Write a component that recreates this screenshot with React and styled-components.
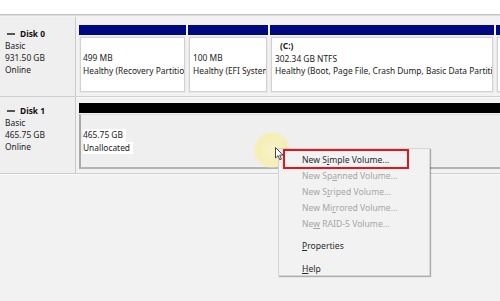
import React from "react";
import styled, { createGlobalStyle } from "styled-components";

const Global = createGlobalStyle`
  html, body { margin: 0; padding: 0; }
  body {
    width: 500px; height: 301px; overflow: hidden;
    background: #f2f2f2;
    font-family: "Noto Sans", "Open Sans", sans-serif;
    font-size: 8.4px;
    color: #222;
  }
`;

const Page = styled.div`
  position: relative;
  width: 500px;
  height: 301px;
  overflow: hidden;
  background: #f2f2f2;
`;

const TopBar = styled.div`
  height: 14px;
  background: #ffffff;
  border-bottom: 1px solid #c4c4c4;
  box-shadow: 0 1px 0 #dcdcdc;
`;

const Volumes = styled.div`
  display: flex;
  flex-direction: column;
  margin-top: 2px;
`;

const DiskRow = styled.div`
  display: flex;
  height: ${(p) => p.$h}px;
  border-bottom: 1px solid #cfcfcf;
  box-shadow: 0 1px 0 #fafafa;
`;

const DiskInfo = styled.div`
  width: 76px;
  flex: none;
  box-sizing: border-box;
  background: #efefef;
  border-right: 1px solid #c9c9c9;
  padding: ${(p) => p.$pt}px 0 0 5px;
  line-height: 12px;
`;

const DiskName = styled.div`
  display: flex;
  align-items: center;
  gap: 5px;
  font-weight: 700;
  color: #111;
  margin-left: 2px;
`;

const Dash = styled.span`
  display: inline-block;
  width: 8px;
  height: 2px;
  background: #555;
`;

const Track = styled.div`
  flex: 1;
  display: flex;
  gap: 2px;
  padding: ${(p) => p.$pt}px 0 0 3px;
  min-width: 0;
`;

const Partition = styled.div`
  flex: ${(p) => (p.$w ? `0 0 ${p.$w}px` : "1 0 40px")};
  display: flex;
  flex-direction: column;
  min-width: 0;
`;

const Bar = styled.div`
  height: 10px;
  background: ${(p) => p.$color};
`;

const Box = styled.div`
  margin-top: 1px;
  height: ${(p) => p.$h}px;
  box-sizing: border-box;
  background: #e9e9e9;
  padding: 1px;
`;

const BoxInner = styled.div`
  height: 100%;
  box-sizing: border-box;
  background: #ffffff;
  border: 1px solid #d2d2d2;
  padding: ${(p) => p.$pt}px 0 0 ${(p) => p.$pl}px;
  line-height: 12.5px;
  white-space: nowrap;
  overflow: hidden;
  color: #222;
`;

const Bold = styled.div`
  font-weight: 700;
  margin-left: 5px;
`;

const Unalloc = styled.div`
  margin-top: 1px;
  height: 55px;
  box-sizing: border-box;
  background: #efefef;
  border-left: 2px solid #a9a9a9;
  border-bottom: 2px solid #b4b4b4;
  border-top: 1px solid #dedede;
  padding: 14px 0 0 2px;
  line-height: 12.5px;
`;

const Line = styled.div`
  display: inline-block;
  background: #ffffff;
  padding-right: 3px;
`;

const Halo = styled.div`
  position: absolute;
  left: 254px;
  top: 132px;
  width: 36px;
  height: 36px;
  border-radius: 50%;
  background: radial-gradient(circle, rgba(255, 245, 170, 0.55) 0%, rgba(250, 238, 140, 0.6) 55%, rgba(250, 240, 160, 0.25) 85%, rgba(250, 240, 160, 0) 100%);
`;

const Cursor = styled.svg`
  position: absolute;
  left: 275px;
  top: 147px;
`;

const Menu = styled.div`
  position: absolute;
  left: 278px;
  top: 148px;
  width: 152px;
  height: 128px;
  box-sizing: border-box;
  background: #f2f2f2;
  border: 1px solid #d6d6d6;
  box-shadow: 1px 1px 1px rgba(0, 0, 0, 0.28);
  padding-top: 3px;
  display: flex;
  flex-direction: column;
`;

const Item = styled.div`
  height: 16px;
  line-height: 16px;
  padding-left: 23px;
  font-size: 8.6px;
  color: ${(p) => (p.$disabled ? "#a6a6a6" : "#2a2a2a")};
  white-space: nowrap;
  u { text-decoration: underline; text-underline-offset: 1px; }
`;

const Sep = styled.div`
  height: 1px;
  background: #e2e2e2;
  margin: ${(p) => p.$m} 4px ${(p) => p.$m} 20px;
`;

const Highlight = styled.div`
  position: absolute;
  left: 283px;
  top: 149px;
  width: 126px;
  height: 20px;
  box-sizing: border-box;
  border: 2px solid #e5141c;
`;

export default function App() {
  return (
    <Page>
      <Global />
      <TopBar />
      <Volumes>
        <DiskRow $h={79}>
          <DiskInfo $pt={11}>
            <DiskName><Dash />Disk 0</DiskName>
            <div>Basic</div>
            <div>931.50 GB</div>
            <div>Online</div>
          </DiskInfo>
          <Track $pt={8}>
            <Partition $w={107}>
              <Bar $color="#00087f" />
              <Box $h={57}>
                <BoxInner $pt={14} $pl={2}>
                  <div>499 MB</div>
                  <div>Healthy (Recovery Partition)</div>
                </BoxInner>
              </Box>
            </Partition>
            <Partition $w={80}>
              <Bar $color="#00087f" />
              <Box $h={57}>
                <BoxInner $pt={14} $pl={3}>
                  <div>100 MB</div>
                  <div>Healthy (EFI System Partition)</div>
                </BoxInner>
              </Box>
            </Partition>
            <Partition $w={224}>
              <Bar $color="#00087f" />
              <Box $h={57}>
                <BoxInner $pt={2} $pl={3}>
                  <Bold>(C:)</Bold>
                  <div>302.34 GB NTFS</div>
                  <div>Healthy (Boot, Page File, Crash Dump, Basic Data Partition)</div>
                </BoxInner>
              </Box>
            </Partition>
            <Partition>
              <Bar $color="#00087f" />
              <Box $h={57}>
                <BoxInner $pt={14} $pl={3} />
              </Box>
            </Partition>
          </Track>
        </DiskRow>
        <DiskRow $h={76}>
          <DiskInfo $pt={8}>
            <DiskName><Dash />Disk 1</DiskName>
            <div>Basic</div>
            <div>465.75 GB</div>
            <div>Online</div>
          </DiskInfo>
          <Track $pt={6}>
            <Partition>
              <Bar $color="#000000" />
              <Unalloc>
                <Line>465.75 GB</Line>
                <br />
                <Line>Unallocated</Line>
              </Unalloc>
            </Partition>
          </Track>
        </DiskRow>
      </Volumes>

      <Halo />
      <Menu>
        <Item>New S<u>i</u>mple Volume...</Item>
        <Item $disabled>New Sp<u>a</u>nned Volume...</Item>
        <Item $disabled>New S<u>t</u>riped Volume...</Item>
        <Item $disabled>New Mi<u>r</u>rored Volume...</Item>
        <Item $disabled>Ne<u>w</u> RAID-5 Volume...</Item>
        <Sep $m="3px" />
        <Item><u>P</u>roperties</Item>
        <Sep $m="2px" />
        <Item style={{ marginTop: 3 }}><u>H</u>elp</Item>
      </Menu>
      <Highlight />
      <Cursor width="9" height="14" viewBox="0 0 9 14">
        <path d="M0.5 0.5 L0.5 11 L3 8.6 L4.8 12.8 L6.4 12.1 L4.7 8.1 L8 8.1 Z" fill="#ffffff" stroke="#333333" strokeWidth="0.9" strokeLinejoin="round" />
      </Cursor>
    </Page>
  );
}
